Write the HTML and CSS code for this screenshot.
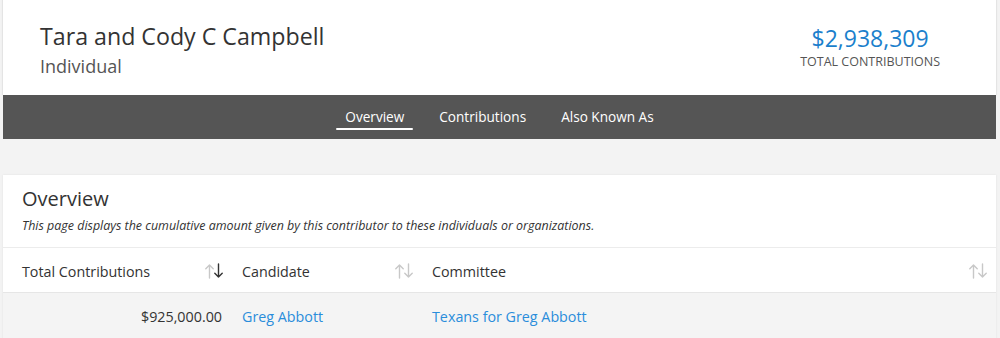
FILE: index.html
```html
<!DOCTYPE html>
<html>
<head>
<meta charset="utf-8">
<link rel="stylesheet" href="styles.css">
</head>
<body>
<div class="page">
  <header class="head">
    <div class="who">
      <h1 class="name">Tara and Cody C Campbell</h1>
      <div class="kind">Individual</div>
    </div>
    <div class="total">
      <div class="amount">$2,938,309</div>
      <div class="label">TOTAL CONTRIBUTIONS</div>
    </div>
  </header>
  <nav class="tabs">
    <a class="tab active">Overview</a>
    <a class="tab">Contributions</a>
    <a class="tab">Also Known As</a>
  </nav>
  <section class="card">
    <div class="intro">
      <h2 class="title">Overview</h2>
      <p class="desc">This page displays the cumulative amount given by this contributor to these individuals or organizations.</p>
    </div>
    <div class="table">
      <div class="row hrow">
        <div class="cell first">Total Contributions
          <svg class="sort" viewBox="0 0 18 16" width="18" height="16"><g fill="none" stroke-width="1.4" stroke-linecap="round" stroke-linejoin="round"><path d="M4.5 15V2M0.8 5.7L4.5 2L8.2 5.7" stroke="#c8c8c8"/><path d="M13.5 1V14M9.8 10.3L13.5 14L17.2 10.3" stroke="#333"/></g></svg>
        </div>
        <div class="cell">Candidate
          <svg class="sort" viewBox="0 0 18 16" width="18" height="16"><g fill="none" stroke="#c8c8c8" stroke-width="1.4" stroke-linecap="round" stroke-linejoin="round"><path d="M4.5 15V2M0.8 5.7L4.5 2L8.2 5.7"/><path d="M13.5 1V14M9.8 10.3L13.5 14L17.2 10.3"/></g></svg>
        </div>
        <div class="cell">Committee
          <svg class="sort" viewBox="0 0 18 16" width="18" height="16"><g fill="none" stroke="#c8c8c8" stroke-width="1.4" stroke-linecap="round" stroke-linejoin="round"><path d="M4.5 15V2M0.8 5.7L4.5 2L8.2 5.7"/><path d="M13.5 1V14M9.8 10.3L13.5 14L17.2 10.3"/></g></svg>
        </div>
      </div>
      <div class="row drow">
        <div class="cell first num">$925,000.00</div>
        <div class="cell"><a class="link">Greg Abbott</a></div>
        <div class="cell"><a class="link">Texans for Greg Abbott</a></div>
      </div>
    </div>
  </section>
</div>
</body>
</html>
```
FILE: styles.css
```css
* { box-sizing: border-box; }
html, body { margin: 0; padding: 0; }
body {
  background: #f3f3f3;
  font-family: "Open Sans", "Liberation Sans", sans-serif;
  color: #333;
}
.page { padding: 0 4px 0 3px; }
.head {
  background: #fff;
  height: 95px;
  display: flex;
  justify-content: space-between;
  align-items: flex-start;
  padding: 20px 56px 0 37px;
  box-shadow: -1px 0 1px rgba(0,0,0,0.06), 1px 0 1px rgba(0,0,0,0.06);
}
.name {
  margin: 0;
  font-size: 23.2px;
  font-weight: 400;
  line-height: 33px;
  color: #333;
}
.kind {
  font-size: 18px;
  line-height: 24px;
  color: #555;
  margin-top: 1px;
}
.total {
  text-align: center;
  padding-top: 3px;
}
.amount {
  font-size: 23px;
  line-height: 30px;
  color: #1b7fcc;
}
.label {
  font-size: 12.5px;
  line-height: 17px;
  color: #555;
}
.tabs {
  background: #555555;
  height: 44px;
  display: flex;
  justify-content: center;
  gap: 17px;
}
.tab {
  color: #fff;
  font-size: 13.6px;
  padding: 12px 9px 0;
  height: 44px;
  line-height: 20px;
  position: relative;
}
.tab.active::after {
  content: "";
  position: absolute;
  left: 0; right: 0;
  top: 33px;
  height: 2px;
  background: #fff;
  border-radius: 1px;
}
.card {
  margin-top: 36px;
  background: #fff;
  box-shadow: 0 0 2px rgba(0,0,0,0.08);
}
.intro { padding: 10px 19px 12px; }
.title {
  margin: 0;
  font-size: 20px;
  font-weight: 400;
  line-height: 28px;
  color: #333;
}
.desc {
  margin: 4px 0 0;
  font-size: 12.45px;
  font-style: italic;
  line-height: 18px;
  color: #333;
}
.table { border-top: 1px solid #ececec; }
.row {
  display: grid;
  grid-template-columns: 229px 190px 1fr;
}
.hrow {
  height: 45px;
  border-bottom: 1px solid #e6e6e6;
  align-items: center;
  padding-top: 2px;
}
.drow {
  height: 46px;
  background: #f4f4f4;
  align-items: center;
}
.cell {
  padding: 0 10px;
  font-size: 14.3px;
  display: flex;
  align-items: center;
  justify-content: space-between;
  color: #333;
}
.cell.first { padding-left: 19px; }
.cell.num { justify-content: flex-end; }
.sort { flex: none; margin-right: -1px; }
.link { color: #2a8ddb; font-size: 14.3px; }
```
